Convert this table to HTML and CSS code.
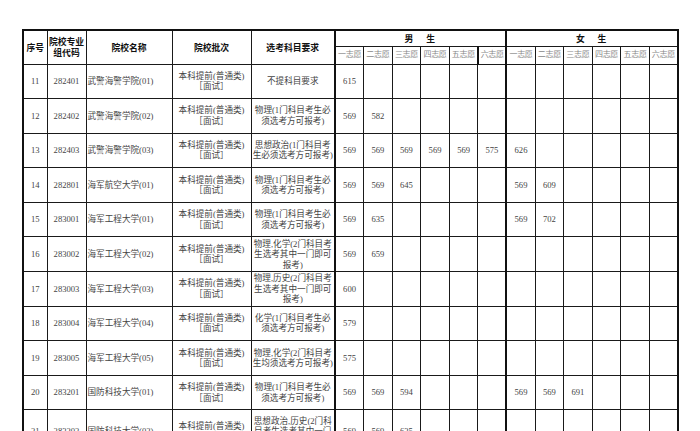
FILE: index.html
```html
<!DOCTYPE html>
<html lang="zh-CN">
<head>
<meta charset="utf-8">
<link rel="stylesheet" href="styles.css">
</head>
<body>
<table class="grid">
  <colgroup>
    <col class="c-no"><col class="c-code"><col class="c-name"><col class="c-batch"><col class="c-req">
    <col class="c-s"><col class="c-s"><col class="c-s"><col class="c-s"><col class="c-s"><col class="c-s">
    <col class="c-s"><col class="c-s"><col class="c-s"><col class="c-s"><col class="c-s"><col class="c-s">
  </colgroup>
  <thead>
    <tr class="h1">
      <th rowspan="2">序号</th>
      <th rowspan="2" class="two">院校专业<br>组代码</th>
      <th rowspan="2">院校名称</th>
      <th rowspan="2">院校批次</th>
      <th rowspan="2">选考科目要求</th>
      <th colspan="6" class="sex">男　生</th>
      <th colspan="6" class="sex split">女　生</th>
    </tr>
    <tr class="h2">
      <th class="sub">一志愿</th><th class="sub">二志愿</th><th class="sub">三志愿</th><th class="sub">四志愿</th><th class="sub">五志愿</th><th class="sub">六志愿</th>
      <th class="sub split">一志愿</th><th class="sub">二志愿</th><th class="sub">三志愿</th><th class="sub">四志愿</th><th class="sub">五志愿</th><th class="sub">六志愿</th>
    </tr>
  </thead>
  <tbody>
    <tr><td>11</td><td>282401</td><td class="name">武警海警学院(01)</td><td>本科提前(普通类)<br>［面试］</td><td>不提科目要求</td>
      <td>615</td><td></td><td></td><td></td><td></td><td></td><td class="split"></td><td></td><td></td><td></td><td></td><td></td></tr>
    <tr><td>12</td><td>282402</td><td class="name">武警海警学院(02)</td><td>本科提前(普通类)<br>［面试］</td><td>物理(1门科目考生必<br>须选考方可报考)</td>
      <td>569</td><td>582</td><td></td><td></td><td></td><td></td><td class="split"></td><td></td><td></td><td></td><td></td><td></td></tr>
    <tr><td>13</td><td>282403</td><td class="name">武警海警学院(03)</td><td>本科提前(普通类)<br>［面试］</td><td>思想政治(1门科目考<br>生必须选考方可报考)</td>
      <td>569</td><td>569</td><td>569</td><td>569</td><td>569</td><td>575</td><td class="split">626</td><td></td><td></td><td></td><td></td><td></td></tr>
    <tr><td>14</td><td>282801</td><td class="name">海军航空大学(01)</td><td>本科提前(普通类)<br>［面试］</td><td>物理(1门科目考生必<br>须选考方可报考)</td>
      <td>569</td><td>569</td><td>645</td><td></td><td></td><td></td><td class="split">569</td><td>609</td><td></td><td></td><td></td><td></td></tr>
    <tr><td>15</td><td>283001</td><td class="name">海军工程大学(01)</td><td>本科提前(普通类)<br>［面试］</td><td>物理(1门科目考生必<br>须选考方可报考)</td>
      <td>569</td><td>635</td><td></td><td></td><td></td><td></td><td class="split">569</td><td>702</td><td></td><td></td><td></td><td></td></tr>
    <tr><td>16</td><td>283002</td><td class="name">海军工程大学(02)</td><td>本科提前(普通类)<br>［面试］</td><td>物理,化学(2门科目考<br>生选考其中一门即可<br>报考)</td>
      <td>569</td><td>659</td><td></td><td></td><td></td><td></td><td class="split"></td><td></td><td></td><td></td><td></td><td></td></tr>
    <tr><td>17</td><td>283003</td><td class="name">海军工程大学(03)</td><td>本科提前(普通类)<br>［面试］</td><td>物理,历史(2门科目考<br>生选考其中一门即可<br>报考)</td>
      <td>600</td><td></td><td></td><td></td><td></td><td></td><td class="split"></td><td></td><td></td><td></td><td></td><td></td></tr>
    <tr><td>18</td><td>283004</td><td class="name">海军工程大学(04)</td><td>本科提前(普通类)<br>［面试］</td><td>化学(1门科目考生必<br>须选考方可报考)</td>
      <td>579</td><td></td><td></td><td></td><td></td><td></td><td class="split"></td><td></td><td></td><td></td><td></td><td></td></tr>
    <tr><td>19</td><td>283005</td><td class="name">海军工程大学(05)</td><td>本科提前(普通类)<br>［面试］</td><td>物理,化学(2门科目考<br>生均须选考方可报考)</td>
      <td>575</td><td></td><td></td><td></td><td></td><td></td><td class="split"></td><td></td><td></td><td></td><td></td><td></td></tr>
    <tr><td>20</td><td>283201</td><td class="name">国防科技大学(01)</td><td>本科提前(普通类)<br>［面试］</td><td>物理(1门科目考生必<br>须选考方可报考)</td>
      <td>569</td><td>569</td><td>594</td><td></td><td></td><td></td><td class="split">569</td><td>569</td><td>691</td><td></td><td></td><td></td></tr>
    <tr class="tall"><td>21</td><td>283202</td><td class="name">国防科技大学(02)</td><td>本科提前(普通类)<br>［面试］</td><td>思想政治,历史(2门科<br>目考生选考其中一门<br>即可报考)</td>
      <td>569</td><td>569</td><td>635</td><td></td><td></td><td></td><td class="split"></td><td></td><td></td><td></td><td></td><td></td></tr>
  </tbody>
</table>
</body>
</html>
```
FILE: styles.css
```css
html, body {
  margin: 0;
  padding: 0;
  background: #fff;
  overflow: hidden;
}
body {
  width: 700px;
  height: 431px;
  padding: 29px 0 0 22px;
  box-sizing: border-box;
  font-family: "Liberation Serif", "Noto Sans CJK SC", serif;
}
.grid {
  border-collapse: collapse;
  table-layout: fixed;
  width: 655px;
  border: 2px solid #111;
}
.c-no { width: 24px; }
.c-code { width: 39px; }
.c-name { width: 86px; }
.c-batch { width: 79px; }
.c-req { width: 84px; }
.c-s { width: 28.58px; }

.grid th, .grid td {
  border: 1.5px solid #1a1a1a;
  padding: 0;
  text-align: center;
  vertical-align: middle;
  overflow: hidden;
  white-space: nowrap;
}
.grid th {
  font-family: "Noto Sans CJK SC", sans-serif;
  font-weight: 700;
  font-size: 8.8px;
  line-height: 11px;
  color: #111;
}
.grid th.two { line-height: 11.5px; }
.h1 { height: 16px; }
.h2 { height: 18px; }
.grid th.sub {
  font-family: "Liberation Serif", "Noto Sans CJK SC", serif;
  font-weight: 400;
  font-size: 8px;
  line-height: 10px;
  color: #888;
  letter-spacing: -0.3px;
}
.grid th.sex { letter-spacing: 2px; }
.grid .split { border-left: 2px solid #111; }
.grid th:nth-child(5) { border-right: 2px solid #111; }
.grid tbody td:nth-child(5) { border-right: 2px solid #111; }

.grid td {
  font-size: 8.6px;
  line-height: 10.5px;
  color: #444;
}
.grid tbody tr { height: 34.6px; }
.grid tbody tr.tall { height: 44px; }
.grid td.name {
  text-align: left;
  padding-left: 1px;
}
```
